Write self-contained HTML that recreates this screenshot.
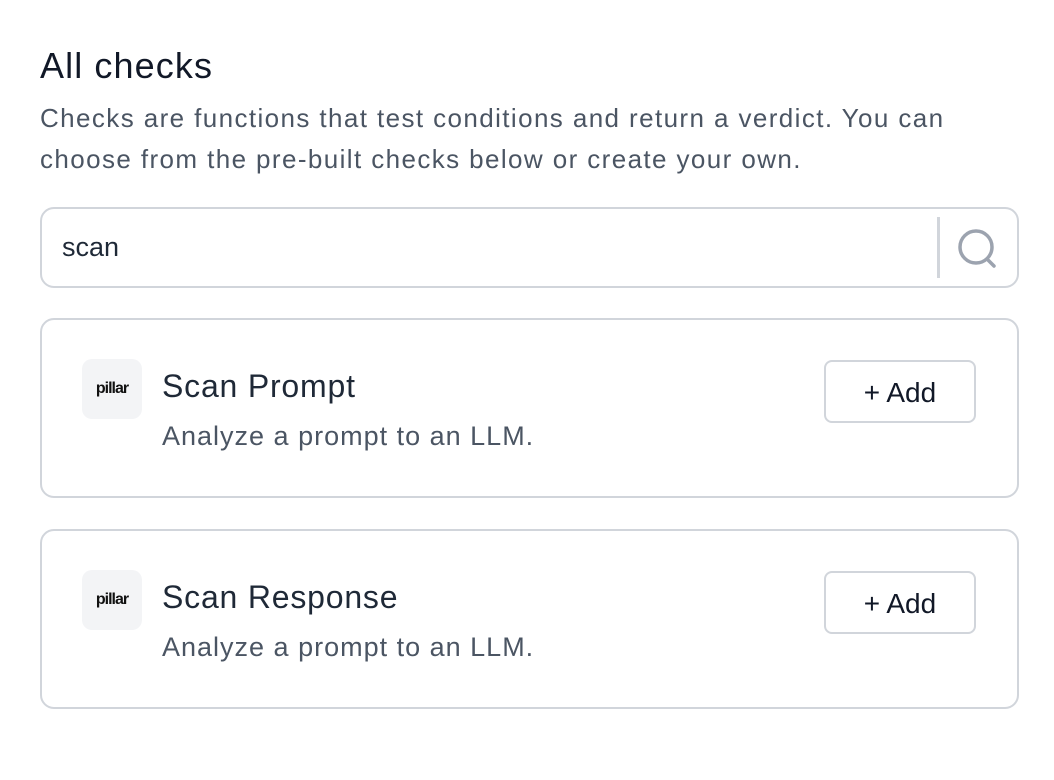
<!DOCTYPE html>
<html><head><style>
body{margin:0;width:1054px;height:780px;background:#fff;font-family:"Liberation Sans",sans-serif;color:#1f2937;position:relative;overflow:hidden}
.a{position:absolute}
h1{position:absolute;left:40px;top:45px;margin:0;font-size:36px;font-weight:400;color:#111827;letter-spacing:1.1px}
.desc{left:40px;top:98px;font-size:26px;line-height:41px;color:#4b5563;width:940px;letter-spacing:1.4px}
.search{left:40px;top:207px;width:975px;height:77px;border:2px solid #d1d5db;border-radius:14px}
.card{left:40px;width:975px;height:176px;border:2px solid #d1d5db;border-radius:14px}
.logo{left:40px;top:39px;width:60px;height:60px;background:#f3f4f6;border-radius:10px;font-size:16px;font-weight:700;text-align:center;line-height:60px;color:#111;letter-spacing:-1px}
.t{left:120px;top:48px;font-size:32px;color:#1f2937;letter-spacing:0.8px}
.d{left:120px;top:101px;font-size:27px;color:#4b5563;letter-spacing:1px}
.btn{left:782px;top:40px;width:148px;height:59px;border:2px solid #d1d5db;border-radius:8px;text-align:center;line-height:61px;font-size:28px;color:#111827}
</style></head><body>
<h1>All checks</h1>
<div class="a desc">Checks are functions that test conditions and return a verdict. You can choose from the pre-built checks below or create your own.</div>
<div class="a search">
<div class="a" style="left:20px;top:23px;font-size:27px;color:#1f2937">scan</div>
<div class="a" style="left:895px;top:8px;width:3px;height:61px;background:#d1d5db"></div>
<svg class="a" style="left:912px;top:17px" width="46" height="46" viewBox="0 0 46 46"><circle cx="22" cy="21" r="16" fill="none" stroke="#9ca3af" stroke-width="3.5"/><line x1="33" y1="33" x2="40" y2="40" stroke="#9ca3af" stroke-width="3.5" stroke-linecap="round"/></svg>
</div>
<div class="a card" style="top:318px">
<div class="a logo">pillar</div>
<div class="a t">Scan Prompt</div>
<div class="a d">Analyze a prompt to an LLM.</div>
<div class="a btn">+ Add</div>
</div>
<div class="a card" style="top:529px">
<div class="a logo">pillar</div>
<div class="a t">Scan Response</div>
<div class="a d">Analyze a prompt to an LLM.</div>
<div class="a btn">+ Add</div>
</div>
</body></html>
